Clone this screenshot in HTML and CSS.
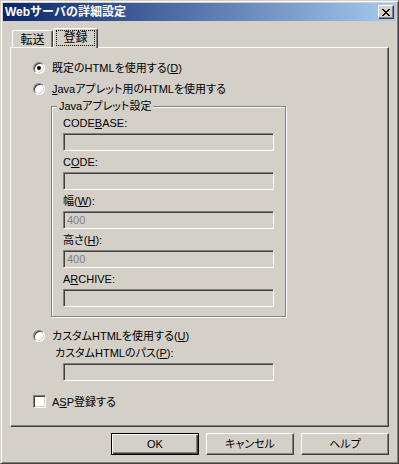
FILE: index.html
```html
<!DOCTYPE html>
<html lang="ja">
<head>
    <meta charset="UTF-8">
    <title>Webサーバの詳細設定</title>
    <link rel="stylesheet" href="styles.css">
</head>
<body>
<div class="window">
    <!-- Title bar -->
    <div class="titlebar">
        <span class="title">Webサーバの詳細設定</span>
        <span class="close-btn">
            <svg width="8" height="7" viewBox="0 0 8 7" shape-rendering="crispEdges">
                <rect x="0" y="0" width="2" height="1"/><rect x="6" y="0" width="2" height="1"/>
                <rect x="1" y="1" width="2" height="1"/><rect x="5" y="1" width="2" height="1"/>
                <rect x="2" y="2" width="4" height="1"/>
                <rect x="3" y="3" width="2" height="1"/>
                <rect x="2" y="4" width="4" height="1"/>
                <rect x="1" y="5" width="2" height="1"/><rect x="5" y="5" width="2" height="1"/>
                <rect x="0" y="6" width="2" height="1"/><rect x="6" y="6" width="2" height="1"/>
            </svg>
        </span>
    </div>

    <div class="client">
        <!-- Tabs -->
        <div class="tabs">
            <div class="tab">転送</div>
            <div class="tab active"><span class="focus">登録</span></div>
        </div>

        <div class="panel">
            <div class="option opt-first"><span class="radio checked"></span>既定のHTMLを使用する(<u>D</u>)</div>
            <div class="option opt-second"><span class="radio"></span><u>J</u>avaアプレット用のHTMLを使用する</div>

            <!-- Java applet group -->
            <div class="group">
                <span class="group-label">Javaアプレット設定</span>
                <div class="field">
                    <div class="field-label">CODE<u>B</u>ASE:</div>
                    <div class="edit"></div>
                </div>
                <div class="field">
                    <div class="field-label">C<u>O</u>DE:</div>
                    <div class="edit"></div>
                </div>
                <div class="field">
                    <div class="field-label">幅(<u>W</u>):</div>
                    <div class="edit">400</div>
                </div>
                <div class="field">
                    <div class="field-label">高さ(<u>H</u>):</div>
                    <div class="edit">400</div>
                </div>
                <div class="field">
                    <div class="field-label">A<u>R</u>CHIVE:</div>
                    <div class="edit"></div>
                </div>
            </div>

            <div class="option opt-custom"><span class="radio"></span>カスタムHTMLを使用する(<u>U</u>)</div>
            <div class="path-label">カスタムHTMLのパス(<u>P</u>):</div>
            <div class="edit path-edit"></div>

            <div class="option opt-check"><span class="checkbox"></span>A<u>S</u>P登録する</div>
        </div>

        <!-- Dialog buttons -->
        <div class="buttons">
            <div class="btn default">OK</div>
            <div class="btn">キャンセル</div>
            <div class="btn">ヘルプ</div>
        </div>
    </div>
</div>
</body>
</html>
```

FILE: styles.css
```css
* {
    margin: 0;
    padding: 0;
    box-sizing: border-box;
}

body {
    font-family: "Liberation Sans", "Noto Sans CJK JP", sans-serif;
    font-size: 11px;
    line-height: 14px;
    font-feature-settings: "palt";
    color: #000;
    background: #d4d0c8;
}

u {
    text-decoration: underline;
    text-underline-offset: 1px;
}

/* Window frame */
.window {
    width: 399px;
    height: 464px;
    background: #d4d0c8;
    border: 1px solid;
    border-color: #d4d0c8 #404040 #404040 #d4d0c8;
    box-shadow: inset 1px 1px #fff, inset -1px -1px #808080;
    padding: 2px;
}

.titlebar {
    height: 18px;
    display: flex;
    align-items: center;
    justify-content: space-between;
    background: linear-gradient(to right, #0a246a, #a6caf0);
    padding: 0 2px;
}

.title {
    color: #fff;
    font-weight: bold;
    font-size: 12px;
    font-feature-settings: normal;
}

.close-btn {
    width: 16px;
    height: 14px;
    display: flex;
    align-items: center;
    justify-content: center;
    background: #d4d0c8;
    border: 1px solid;
    border-color: #fff #404040 #404040 #fff;
    box-shadow: inset -1px -1px #808080;
}

/* Client area */
.client {
    padding: 7px 0 0 7px;
}

.tabs {
    display: flex;
    align-items: flex-end;
    height: 19px;
    padding-left: 2px;
}

.tab {
    width: 41px;
    height: 17px;
    display: flex;
    align-items: center;
    justify-content: center;
    background: #d4d0c8;
    border: 1px solid;
    border-bottom: none;
    border-color: #fff #404040 #fff #fff;
    border-radius: 2px 2px 0 0;
    box-shadow: inset -1px 0 #808080;
    padding-top: 1px;
    font-size: 12px;
}

.tab.active {
    width: 45px;
    height: 20px;
    margin-bottom: -1px;
    position: relative;
    z-index: 1;
    padding-top: 0;
    padding-bottom: 2px;
}

.focus {
    display: inline-block;
    outline: 1px dotted #000;
    padding: 0 6px;
    line-height: 14px;
}

.panel {
    width: 379px;
    height: 380px;
    border: 1px solid;
    border-color: #fff #404040 #404040 #fff;
    box-shadow: inset -1px -1px #808080;
    padding-top: 13px;
}

/* Radio and check options */
.option {
    display: flex;
    align-items: center;
    height: 14px;
    padding-left: 22px;
}

.opt-second {
    margin-top: 7px;
}

.opt-custom {
    margin-top: 12px;
}

.opt-check {
    margin-top: 14px;
    height: 13px;
}

.radio {
    width: 12px;
    height: 12px;
    border-radius: 50%;
    background: #fff;
    border: 1px solid;
    border-color: #808080 #fff #fff #808080;
    box-shadow: inset 1px 1px #404040, inset -1px -1px #d4d0c8;
    margin-right: 7px;
    display: flex;
    align-items: center;
    justify-content: center;
}

.radio.checked::after {
    content: "";
    width: 4px;
    height: 4px;
    border-radius: 50%;
    background: #000;
}

.checkbox {
    width: 13px;
    height: 13px;
    background: #fff;
    border: 1px solid;
    border-color: #808080 #fff #fff #808080;
    box-shadow: inset 1px 1px #404040, inset -1px -1px #d4d0c8;
    margin-right: 6px;
}

/* Group box */
.group {
    position: relative;
    width: 235px;
    height: 211px;
    margin: 10px 0 0 40px;
    border: 1px solid #808080;
    box-shadow: inset 1px 1px #fff, 1px 1px #fff;
    padding: 9px 0 0 11px;
}

.group-label {
    position: absolute;
    top: -8px;
    left: 5px;
    padding: 0 2px;
    background: #d4d0c8;
}

.field {
    margin-bottom: 4px;
}

.field-label {
    height: 14px;
    margin-bottom: 3px;
}

.edit {
    width: 211px;
    height: 18px;
    background: #d4d0c8;
    color: #808080;
    border: 1px solid;
    border-color: #808080 #fff #fff #808080;
    box-shadow: inset 1px 1px #404040, inset -1px -1px #d4d0c8;
    padding: 1px 0 0 3px;
    line-height: 15px;
}

.path-label {
    margin: 3px 0 0 44px;
    height: 14px;
}

.path-edit {
    margin: 3px 0 0 52px;
}

/* Buttons */
.buttons {
    width: 379px;
    display: flex;
    justify-content: flex-end;
    gap: 7px;
    margin-top: 6px;
}

.btn {
    width: 88px;
    height: 22px;
    display: flex;
    align-items: center;
    justify-content: center;
    border: 1px solid;
    border-color: #fff #404040 #404040 #fff;
    box-shadow: inset -1px -1px #808080;
}

.btn.default {
    border-color: #000;
    box-shadow: inset 1px 1px #fff, inset -1px -1px #404040, inset -2px -2px #808080;
}
```
